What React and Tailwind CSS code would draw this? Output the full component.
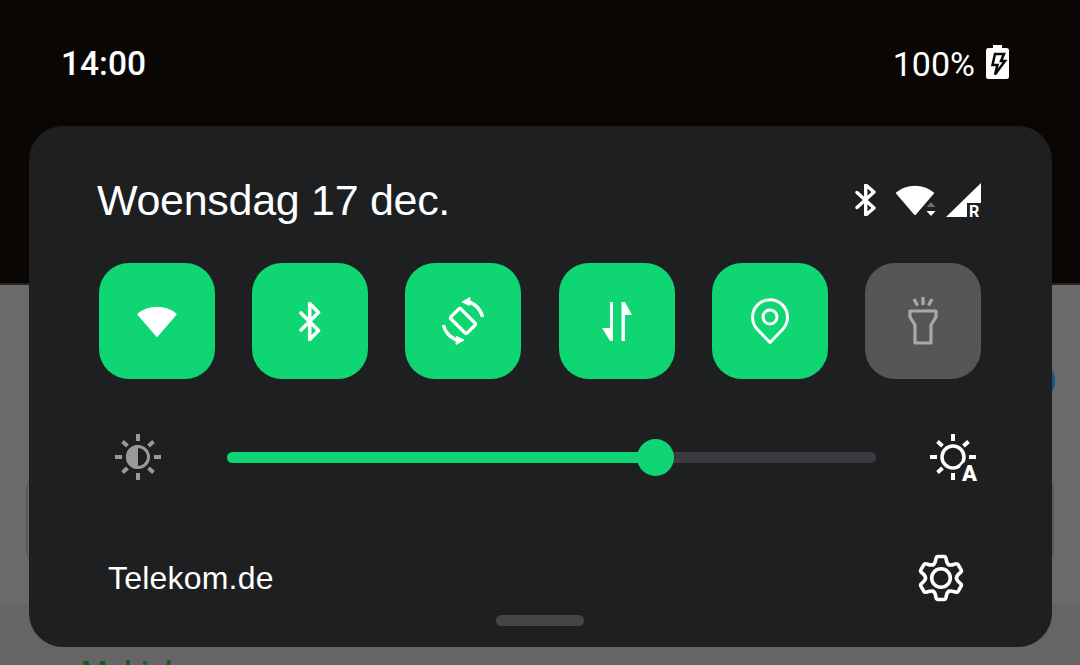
const Tile = ({ children, off }) => (
  <div
    className={`flex h-[116px] w-[116px] items-center justify-center rounded-[30px] ${
      off ? "bg-[#565656]" : "bg-[#0fd673]"
    }`}
  >
    {children}
  </div>
);

const WifiSector = ({ className }) => (
  <svg viewBox="0 0 40 32" className={className}>
    <path
      d="M2 9C12 .5 28 .5 38 9L20 30Z"
      fill="white"
      stroke="white"
      strokeWidth="2"
      strokeLinejoin="round"
    />
  </svg>
);

const Rays = ({ color }) => (
  <g stroke={color} strokeWidth="4">
    <path d="M24 1v7M24 40v7M1 24h7M40 24h7" />
    <path d="M8.500 8.500l5 4.500M39.500 8.500l-5 4.500M8.500 39.500l5-4.500M39.500 39.500l-5-4.500" />
  </g>
);

const Gear = () => (
  <svg viewBox="0 0 48 48" className="h-[48px] w-[48px]" fill="none" stroke="white" strokeWidth="3.600" strokeLinecap="round" strokeLinejoin="round">
    {[0, 60, 120, 180, 240, 300].map((angle) => (
      <path
        key={angle}
        transform={`rotate(${angle} 24 24)`}
        d="M16.250 10.600C18.500 9.300 18.600 6.500 19 4.500Q19.400 2.500 21 2.500H27Q28.600 2.500 29 4.500C29.400 6.500 29.500 9.300 31.750 10.600"
      />
    ))}
    <circle cx="24" cy="24" r="9.300" />
  </svg>
);

const StatusIcons = () => (
  <div className="flex items-center">
    <svg viewBox="0 0 22 32" className="h-[32px] w-[22px]" fill="none" stroke="white" strokeWidth="3.400" strokeLinecap="round" strokeLinejoin="round">
      <path d="M2 8.500 19 24 10.700 31V1L19 8 2 23.500" />
    </svg>
    <div className="relative ml-[18px] h-[32px] w-[40px]">
      <WifiSector className="h-[32px] w-[40px]" />
      <svg viewBox="0 0 12 16" className="absolute left-[30px] top-[17px] h-[16px] w-[12px]">
        <path d="M6 1l4.500 5h-9z" fill="#6b6d6f" />
        <path d="M6 15l4.500-5h-9z" fill="white" />
      </svg>
    </div>
    <svg viewBox="0 0 35 34" className="ml-[11px] h-[34px] w-[35px]" overflow="visible">
      <path d="M35 0V20H21V34H0Z" fill="white" />
      <text x="23" y="34" fontFamily="Roboto, sans-serif" fontWeight="700" fontSize="16" fill="white">
        R
      </text>
    </svg>
  </div>
);

export default function App() {
  return (
    <div className="relative flex h-[665px] w-[1080px] flex-col overflow-hidden bg-[#6a6a6a]">
      {/* status bar over the dark header */}
      <div className="flex h-[285px] shrink-0 items-start justify-between border-b-2 border-[#26221f] bg-[#0a0604] pl-[61px] pr-[71px] pt-[44px] font-['Roboto',sans-serif] text-[34px] leading-[40px] text-white">
        <span className="text-[33.500px] font-medium">14:00</span>
        <div className="flex items-center gap-[11px]">
          <span>100%</span>
          <svg viewBox="0 0 23 34" className="mb-[4px] h-[34px] w-[23px]">
            <path
              d="M7 0h9v3h4.500A2.500 2.500 0 0 1 23 5.500V31.500A2.500 2.500 0 0 1 20.500 34H2.500A2.500 2.500 0 0 1 0 31.500V5.500A2.500 2.500 0 0 1 2.500 3H7Z"
              fill="white"
            />
            <path d="M9 9H18L15 16H19L9 29.500 11.500 20H6.500Z" fill="white" stroke="#0a0604" strokeWidth="2.500" />
          </svg>
        </div>
      </div>

      {/* page behind the panel */}
      <div className="h-[320px] shrink-0 px-[26px] pt-[190px]">
        <div className="h-[90px] rounded-[14px] border-2 border-[#5c5c5c]" />
      </div>
      <div className="min-h-0 flex-1 border-t border-[#646464] bg-[#656565] pl-[81px] pt-[48px] font-['Roboto',sans-serif] text-[30px] font-medium leading-[36px] text-[#165c1a]">
        Mobiel
      </div>
      <div className="absolute left-[1024px] top-[364px] h-[34px] w-[31px] rounded-full bg-[#14587c]" />

      {/* quick settings panel */}
      <div className="absolute left-[29px] top-[126px] flex h-[521px] w-[1023px] flex-col rounded-[34px] bg-[#1e1f21] pt-[47px] font-['Liberation_Sans',sans-serif] text-white">
        <div className="flex h-[54px] items-center justify-between pl-[68px] pr-[71px]">
          <span className="text-[43px] leading-[54px] tracking-[-0.3px]">Woensdag 17 dec.</span>
          <StatusIcons />
        </div>

        <div className="mt-[36px] flex justify-between pl-[70px] pr-[71px]">
          <Tile>
            <WifiSector className="h-[33px] w-[42px]" />
          </Tile>
          <Tile>
            <svg viewBox="0 0 22 39" className="h-[39px] w-[22px]" fill="none" stroke="white" strokeWidth="3.600" strokeLinecap="round" strokeLinejoin="round">
              <path d="M2 11 19.500 28.500 10.700 37.500V1.500L19.500 10.500 2 28" />
            </svg>
          </Tile>
          <Tile>
            <svg viewBox="0 0 48 48" className="h-[48px] w-[48px]" fill="none" stroke="white" strokeWidth="3.400">
              <rect x="17" y="12.500" width="14" height="23" rx="2" transform="rotate(-45 24 24)" />
              <path d="M28 4.500A20 20 0 0 1 43.500 20" />
              <path d="M20 43.500A20 20 0 0 1 4.500 28" />
              <path d="M23 5 31 .5 30.500 8.500Z" fill="white" strokeWidth="1" />
              <path d="M25 43 17 47.500 17.500 39.500Z" fill="white" strokeWidth="1" />
            </svg>
          </Tile>
          <Tile>
            <svg viewBox="0 0 30 39" className="h-[39px] w-[30px]" fill="white">
              <path d="M8 0H11V39H8L0 26H8Z" />
              <path d="M19.500 0H23L30 13H23V39H19.500Z" />
            </svg>
          </Tile>
          <Tile>
            <svg viewBox="0 0 42 48" className="h-[48px] w-[42px]" fill="none" stroke="white" strokeWidth="3" strokeLinejoin="round">
              <path d="M21 45.500 8.500 32.500A17.500 17.500 0 1 1 33.500 32.500Z" />
              <circle cx="21" cy="20" r="7" />
            </svg>
          </Tile>
          <Tile off>
            <svg viewBox="0 0 32 48" className="h-[48px] w-[32px]" fill="none" stroke="#a9a9a9" strokeWidth="3.200" strokeLinejoin="round">
              <path d="M16 0v8M7 2l3.500 6.500M25 2l-3.500 6.500" />
              <path d="M3 14H29V20L24 28V46H8V28L3 20Z" />
            </svg>
          </Tile>
        </div>

        {/* brightness */}
        <div className="mt-[56px] flex h-[44px] items-center pl-[85px] pr-[71px]">
          <svg viewBox="0 0 48 48" className="h-[48px] w-[48px] shrink-0">
            <Rays color="#98999b" />
            <circle cx="24" cy="24" r="10.500" fill="#1e1f21" stroke="#98999b" strokeWidth="3" />
            <path d="M24 12A12 12 0 0 0 24 36Z" fill="#98999b" />
          </svg>
          <div className="relative ml-[65px] mr-[53px] h-[11px] flex-1 rounded-full bg-[#3a3b3e]">
            <div className="h-full w-[429px] rounded-full bg-[#0fd673]" />
            <div className="absolute left-[410px] top-[-13px] h-[37px] w-[37px] rounded-full bg-[#0fd673]" />
          </div>
          <svg viewBox="0 0 52 48" className="h-[48px] w-[52px] shrink-0" overflow="visible">
            <Rays color="white" />
            <circle cx="24" cy="24" r="11" fill="none" stroke="white" strokeWidth="3.500" />
            <circle cx="41" cy="39" r="11" fill="#1e1f21" />
            <text x="33" y="47.500" fontFamily="Roboto, sans-serif" fontWeight="900" fontSize="22" fill="white">
              A
            </text>
          </svg>
        </div>

        <div className="mt-[75px] flex h-[48px] items-center justify-between pl-[79px] pr-[87px]">
          <span className="text-[32px] leading-[48px] tracking-[0.2px]">Telekom.de</span>
          <Gear />
        </div>

        <div className="ml-[467px] mt-[13px] h-[11px] w-[88px] rounded-full bg-[#444547]" />
      </div>
    </div>
  );
}
